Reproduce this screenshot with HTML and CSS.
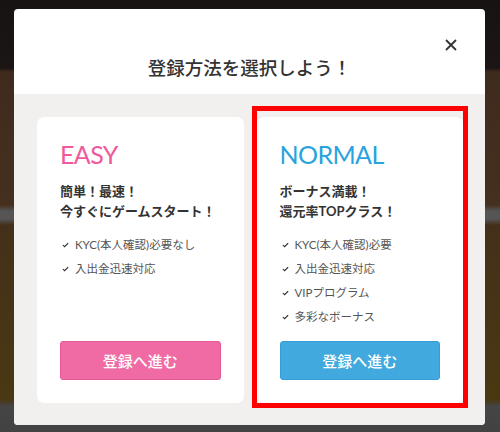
FILE: index.html
```html
<!DOCTYPE html>
<html lang="ja">
<head>
    <meta charset="UTF-8">
    <meta name="viewport" content="width=device-width, initial-scale=1.0">
    <title>登録方法を選択</title>
    <link rel="stylesheet" href="styles.css">
</head>
<body>
    <div class="backdrop">
        <div class="modal">
            <header class="modal-head">
                <h2 class="modal-title">登録方法を選択しよう！</h2>
                <button class="close-btn" aria-label="閉じる">
                    <svg width="12" height="12" viewBox="0 0 12 12"><path d="M1 1L11 11M11 1L1 11" stroke="#333" stroke-width="1.8" fill="none"/></svg>
                </button>
            </header>
            <main class="modal-body">
                <section class="plan easy">
                    <h3 class="plan-name">EASY</h3>
                    <p class="plan-lead">簡単！最速！<br>今すぐにゲームスタート！</p>
                    <ul class="plan-list">
                        <li><svg class="check" viewBox="0 0 8 6"><path d="M1 3.2L3 5L7 1" stroke="#333" stroke-width="1.3" fill="none"/></svg>KYC(本人確認)必要なし</li>
                        <li><svg class="check" viewBox="0 0 8 6"><path d="M1 3.2L3 5L7 1" stroke="#333" stroke-width="1.3" fill="none"/></svg>入出金迅速対応</li>
                    </ul>
                    <button class="plan-btn">登録へ進む</button>
                </section>
                <section class="plan normal">
                    <h3 class="plan-name">NORMAL</h3>
                    <p class="plan-lead">ボーナス満載！<br>還元率TOPクラス！</p>
                    <ul class="plan-list">
                        <li><svg class="check" viewBox="0 0 8 6"><path d="M1 3.2L3 5L7 1" stroke="#333" stroke-width="1.3" fill="none"/></svg>KYC(本人確認)必要</li>
                        <li><svg class="check" viewBox="0 0 8 6"><path d="M1 3.2L3 5L7 1" stroke="#333" stroke-width="1.3" fill="none"/></svg>入出金迅速対応</li>
                        <li><svg class="check" viewBox="0 0 8 6"><path d="M1 3.2L3 5L7 1" stroke="#333" stroke-width="1.3" fill="none"/></svg>VIPプログラム</li>
                        <li><svg class="check" viewBox="0 0 8 6"><path d="M1 3.2L3 5L7 1" stroke="#333" stroke-width="1.3" fill="none"/></svg>多彩なボーナス</li>
                    </ul>
                    <button class="plan-btn">登録へ進む</button>
                    <div class="highlight"></div>
                </section>
            </main>
        </div>
    </div>
</body>
</html>
```

FILE: styles.css
```css
html, body {
    margin: 0;
    height: 432px;
    overflow: hidden;
}
body {
    font-family: Lato, "Noto Sans CJK JP", sans-serif;
    color: #333;
    background: linear-gradient(180deg, #181313 0px, #1b1515 68px, #3f2a1e 72px, #45301f 205px, #555 211px, #555 219px, #44301a 225px, #4a3812 400px, #454545 406px, #424242 432px);
}
.backdrop {
    padding: 9px 15px 0 14px;
}
.modal {
    width: 471px;
    background: #fff;
    border-radius: 4px;
    overflow: hidden;
}
.modal-head {
    position: relative;
    height: 85px;
    box-sizing: border-box;
    padding-top: 44px;
}
.modal-title {
    margin: 0;
    text-align: center;
    font-size: 18.5px;
    font-weight: 500;
    line-height: 30px;
    color: #333;
}
.close-btn {
    position: absolute;
    top: 28px;
    right: 26px;
    width: 16px;
    height: 16px;
    padding: 2px;
    border: none;
    background: none;
    cursor: pointer;
}
.close-btn svg {
    display: block;
}
.modal-body {
    display: grid;
    grid-template-columns: 1fr 1fr;
    gap: 13px;
    background: #f1f0ee;
    padding: 23px 22px 22px 23px;
}
.plan {
    position: relative;
    height: 286px;
    box-sizing: border-box;
    background: #fff;
    border-radius: 7px;
    padding: 23px 23px 23px 23px;
    display: flex;
    flex-direction: column;
}
.plan-name {
    margin: 0;
    font-size: 25px;
    font-weight: 400;
    letter-spacing: -0.6px;
    line-height: 29px;
}
.easy .plan-name {
    color: #ee5a9b;
}
.normal .plan-name {
    color: #27a3dd;
}
.plan-lead {
    margin: 12px 0 0;
    font-size: 13px;
    font-weight: 700;
    line-height: 20px;
    color: #333;
}
.plan-list {
    list-style: none;
    margin: 12px 0 0;
    padding: 0;
}
.plan-list li {
    font-size: 11.5px;
    line-height: 24px;
    color: #555;
    display: flex;
    align-items: center;
}
.check {
    width: 7px;
    height: 6px;
    margin: 0 6px 0 2px;
}
.plan-btn {
    margin-top: auto;
    height: 39px;
    width: 100%;
    border-radius: 3px;
    font-family: Lato, "Noto Sans CJK JP", sans-serif;
    font-size: 15px;
    font-weight: 500;
    color: #fff;
    cursor: pointer;
}
.easy .plan-btn {
    background: #f06ba3;
    border: 1px solid #e6589a;
}
.normal .plan-btn {
    background: #41a9de;
    border: 1px solid #339fd8;
}
.highlight {
    position: absolute;
    top: -11px;
    left: -5px;
    right: -5px;
    bottom: -5px;
    border: 5px solid #ff0000;
    pointer-events: none;
}
```
